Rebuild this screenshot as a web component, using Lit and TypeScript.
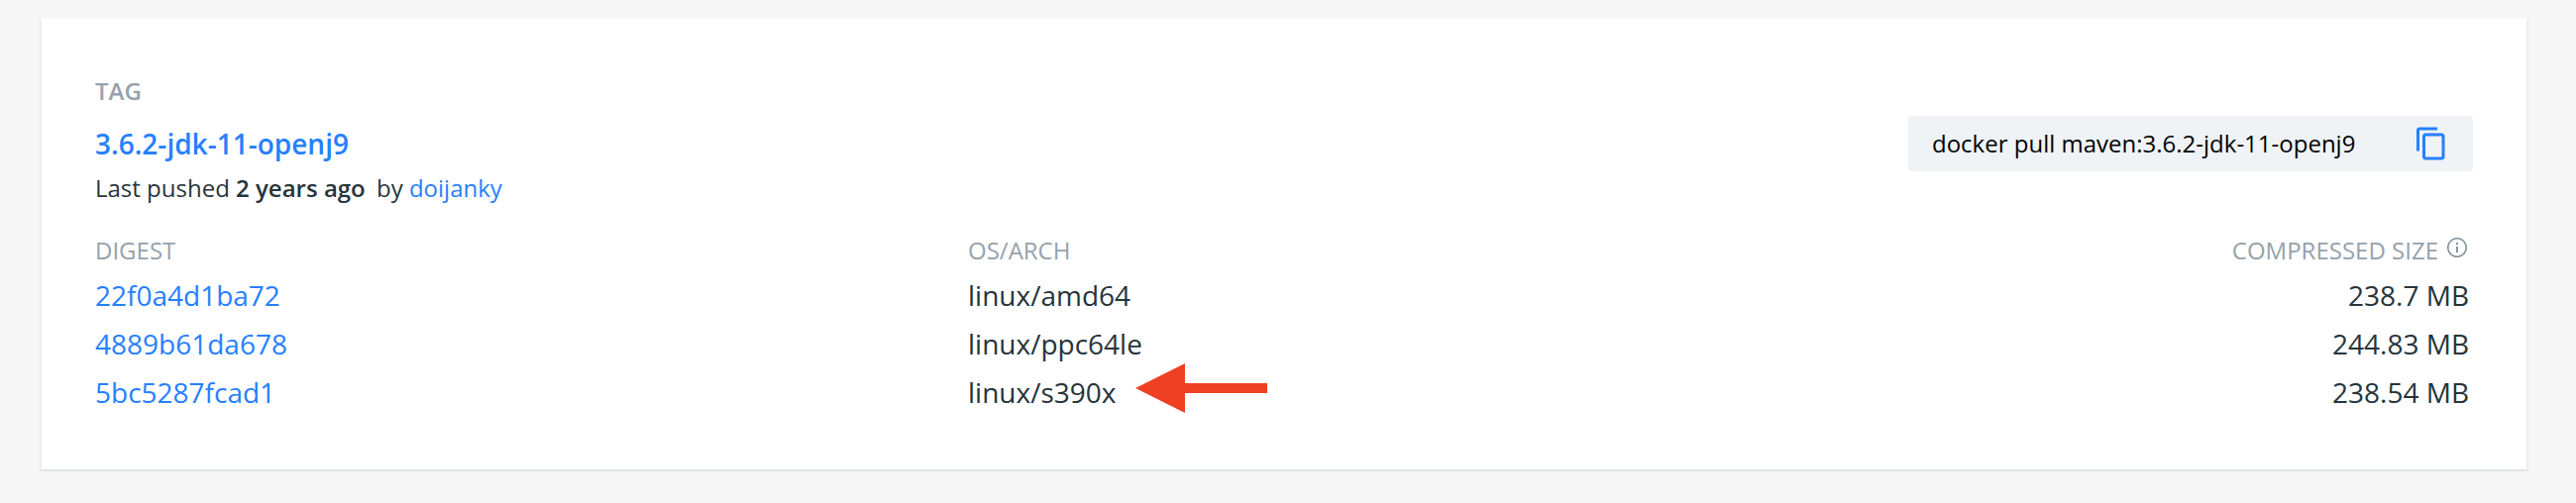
import { LitElement, html, css } from "lit";
import { customElement } from "lit/decorators.js";

interface TagImage {
  digest: string;
  arch: string;
  size: string;
  marked?: boolean;
}

@customElement("app-root")
export class AppRoot extends LitElement {
  static styles = css`
    :host {
      display: block;
      box-sizing: border-box;
      height: 508px;
      padding: 19px 48px 32px 40px;
      background: #f7f7f7;
      color: #27343b;
      font: 24px/36px "Open Sans", sans-serif;
    }
    a {
      color: #2680ff;
      text-decoration: none;
    }
    .card {
      box-sizing: border-box;
      height: 457px;
      padding: 55px 54px 0;
      background: #fff;
      border: solid #ecedf2;
      border-width: 0 2px 2px;
      border-bottom-color: #e0e4e8;
    }
    .top {
      display: flex;
      justify-content: space-between;
      align-items: flex-start;
    }
    .label {
      color: #96a2ab;
    }
    .strong {
      font-weight: 600;
    }
    .title {
      display: block;
      margin: 14px 0 6px;
      font-size: 28px;
      line-height: 42px;
      font-weight: 600;
    }
    .by {
      margin-left: 5px;
    }
    .pull {
      display: flex;
      box-sizing: border-box;
      justify-content: space-between;
      align-items: center;
      width: 570px;
      height: 56px;
      margin-top: 43px;
      padding: 0 24px;
      border-radius: 4px;
      background: #eff3f6;
      color: #000;
    }
    .copy {
      width: 36px;
      height: 36px;
      fill: #2680ff;
    }
    .grid {
      display: grid;
      grid-template-columns: 881px 879px 1fr;
      margin-top: 27px;
      padding-right: 4px;
    }
    .grid .label {
      margin-bottom: 3px;
    }
    .cell {
      font-size: 28px;
      line-height: 49px;
    }
    .right {
      display: flex;
      justify-content: flex-end;
    }
    .info {
      width: 24px;
      height: 24px;
      margin: 3px 0 0 7px;
      fill: #82929c;
    }
    .arch {
      display: flex;
      align-items: center;
    }
    .arrow {
      width: 133px;
      height: 50px;
      margin: -9px 0 0 19.6px;
      fill: #ef4023;
    }
  `;

  private images: TagImage[] = [
    { digest: "22f0a4d1ba72", arch: "linux/amd64", size: "238.7 MB" },
    { digest: "4889b61da678", arch: "linux/ppc64le", size: "244.83 MB" },
    { digest: "5bc5287fcad1", arch: "linux/s390x", size: "238.54 MB", marked: true },
  ];

  private row(image: TagImage) {
    return html`
      <div class="cell"><a>${image.digest}</a></div>
      <div class="cell arch">
        <span>${image.arch}</span>${image.marked
          ? html`<svg class="arrow" viewBox="0 0 133 50"><path d="M0 25 50 0V20H133V30H50V50Z" /></svg>`
          : ""}
      </div>
      <div class="cell right">${image.size}</div>
    `;
  }

  render() {
    return html`
      <section class="card">
        <div class="top">
          <div>
            <div class="label strong">TAG</div>
            <a class="title">3.6.2-jdk-11-openj9</a>
            <div>Last pushed <span class="strong">2 years ago</span> <span class="by">by <a>doijanky</a></span></div>
          </div>
          <div class="pull">
            <span>docker pull maven:3.6.2-jdk-11-openj9</span>
            <svg class="copy" viewBox="0 0 24 24">
              <path d="M16 1H4c-1.1 0-2 .9-2 2v14h2V3h12V1zm3 4H8c-1.1 0-2 .9-2 2v14c0 1.1.9 2 2 2h11c1.1 0 2-.9 2-2V7c0-1.1-.9-2-2-2zm0 16H8V7h11v14z" />
            </svg>
          </div>
        </div>
        <div class="grid">
          <div class="label">DIGEST</div>
          <div class="label">OS/ARCH</div>
          <div class="label right">
            COMPRESSED SIZE
            <svg class="info" viewBox="0 0 24 24">
              <path d="M11 7h2v2h-2zm0 4h2v6h-2zm1-9C6.480 2 2 6.480 2 12s4.480 10 10 10 10-4.480 10-10S17.520 2 12 2zm0 18.400c-4.630 0-8.400-3.770-8.400-8.400s3.770-8.400 8.400-8.400 8.400 3.770 8.400 8.400-3.770 8.400-8.400 8.400z" />
            </svg>
          </div>
          ${this.images.map((image) => this.row(image))}
        </div>
      </section>
    `;
  }
}
